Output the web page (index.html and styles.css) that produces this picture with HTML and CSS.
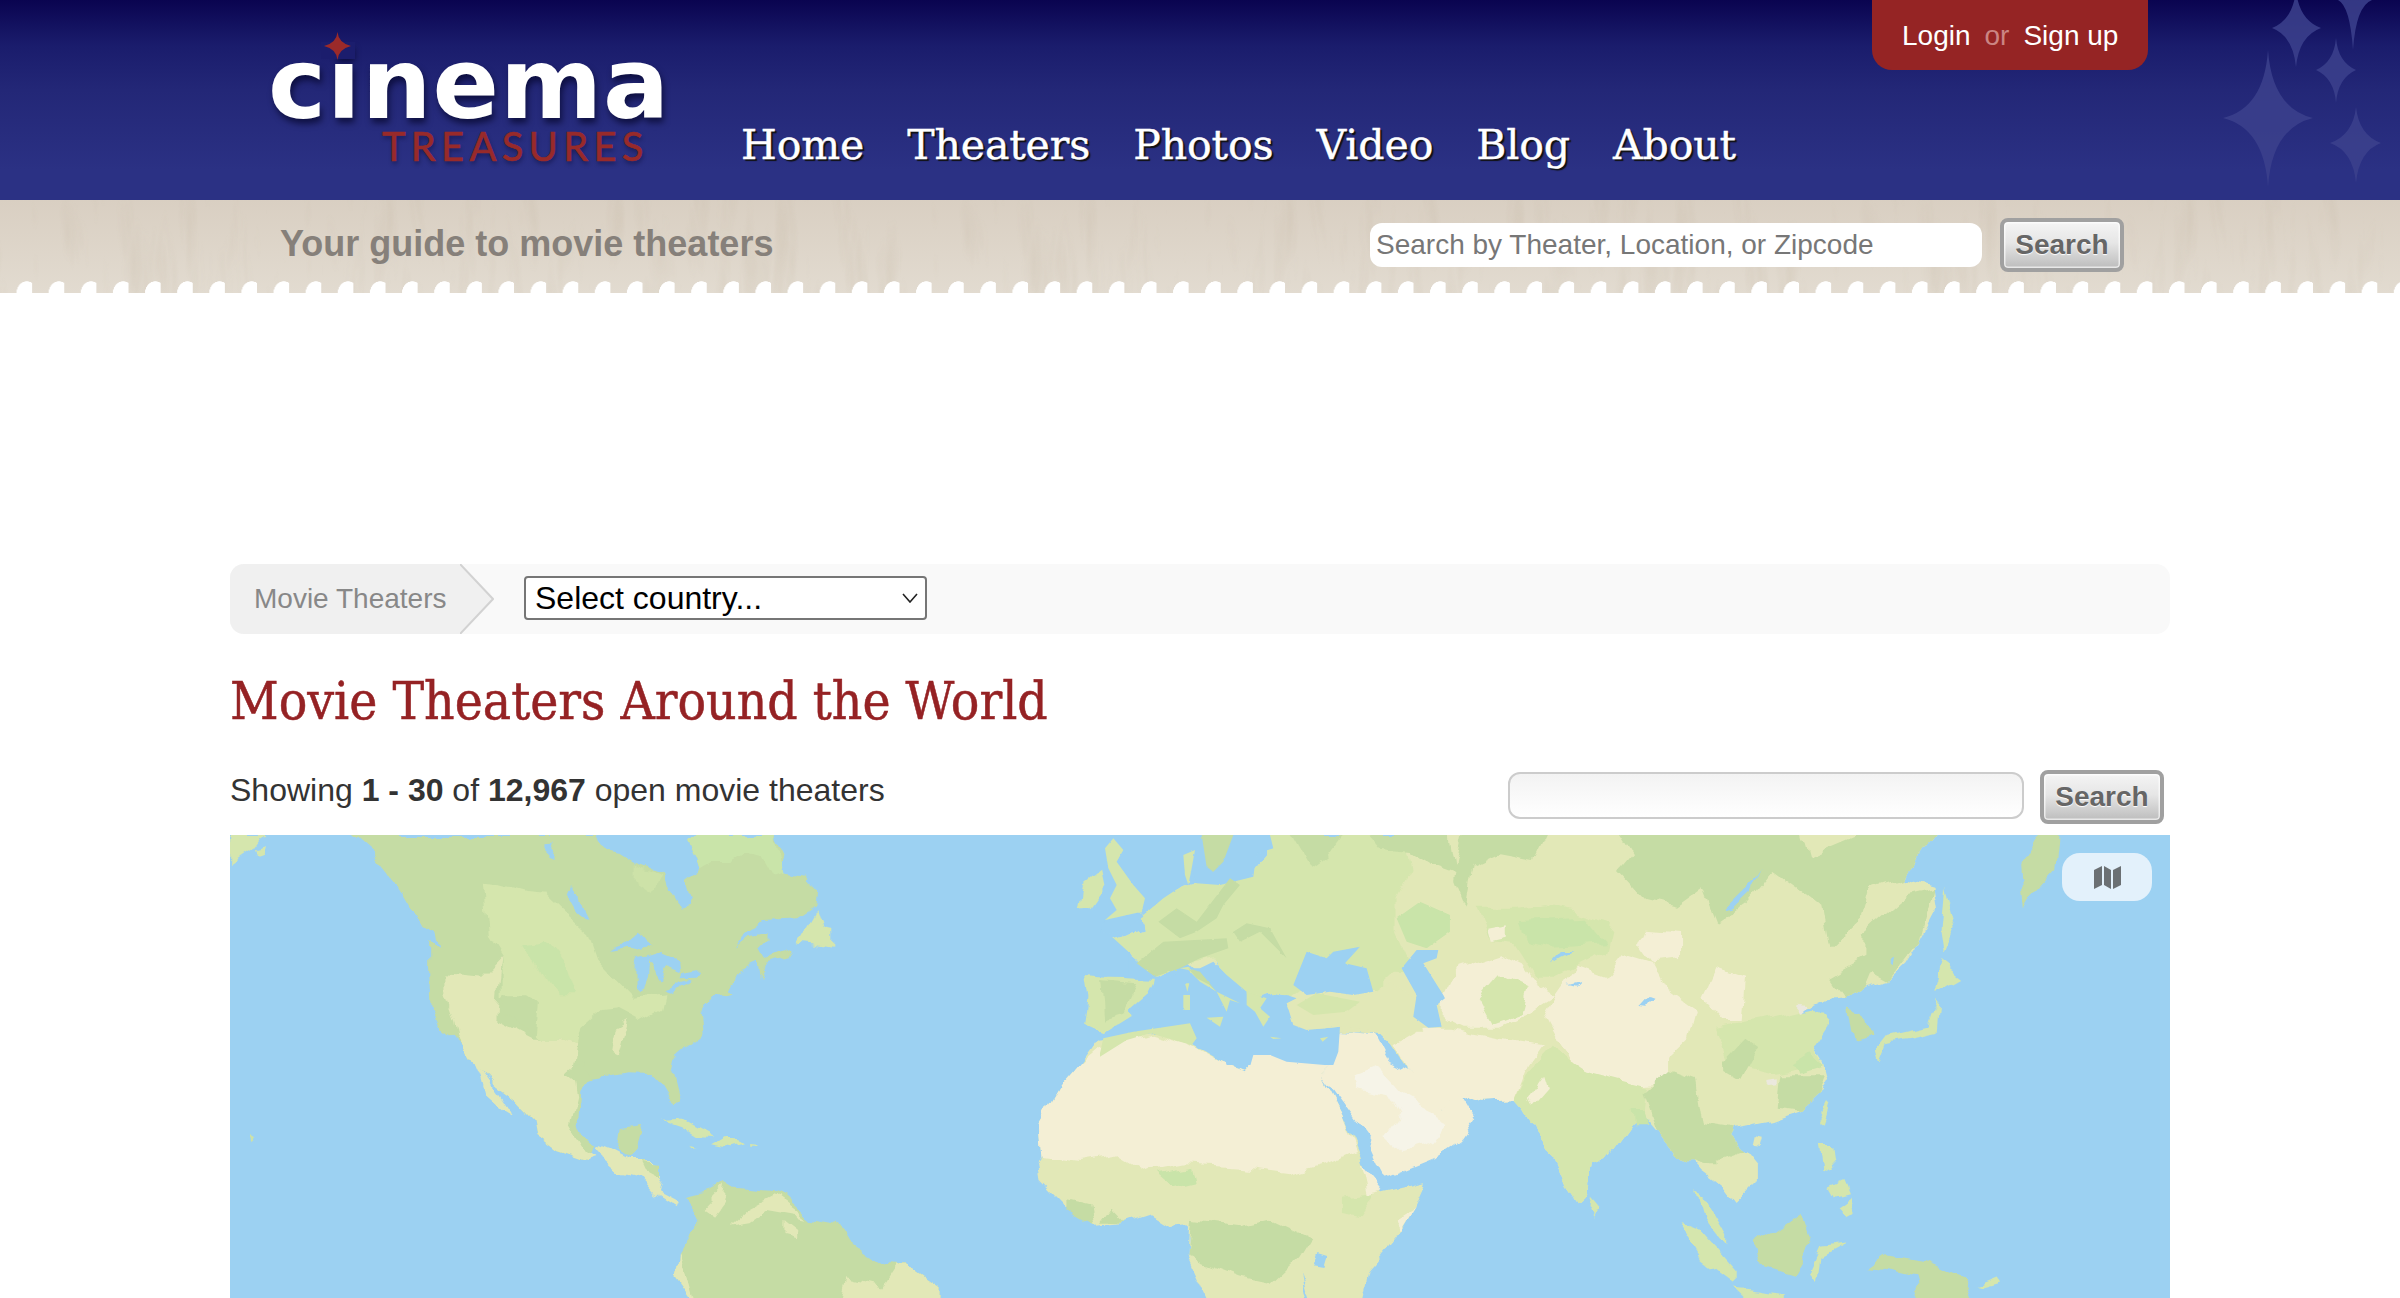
FILE: index.html
```html
<!DOCTYPE html>
<html lang="en">
<head>
<meta charset="utf-8">
<title>Movie Theaters Around the World - Cinema Treasures</title>
<link rel="stylesheet" href="styles.css">
</head>
<body>
<header class="top">
  <svg class="top-stars" viewBox="0 0 200 200" aria-hidden="true">
    <path d="M68 50Q72 108 113 118Q72 128 68 187Q64 128 23 118Q64 108 68 50Z"/>
    <path d="M96 -10Q99 20 121 28Q99 36 96 67Q93 36 72 28Q93 20 96 -10Z"/>
    <path d="M136 38Q138 62 156 70Q138 78 136 103Q134 78 116 70Q134 62 136 38Z"/>
    <path d="M156 107Q159 135 181 143Q159 151 156 183Q153 151 130 143Q153 135 156 107Z"/>
    <path d="M153 -30Q156 -6 172 0Q156 6 153 50Q150 6 138 0Q150 -6 153 -30Z"/>
  </svg>
  <a class="logo" href="#">
    <span class="logo-word">cinema</span>
    <span class="logo-sub">TREASURES</span>
    <svg class="logo-star" viewBox="-3 0 34 28" aria-hidden="true"><rect class="logo-star-back" x="-3" y="10" width="34" height="17"/><path d="M13.5 0Q14.5 11 27 14Q14.5 17 13.5 28Q12.5 17 0 14Q12.5 11 13.5 0Z"/></svg>
  </a>
  <nav class="nav">
    <a href="#">Home</a><a href="#">Theaters</a><a href="#">Photos</a><a href="#">Video</a><a href="#">Blog</a><a href="#">About</a>
  </nav>
  <div class="account"><a href="#">Login</a><span class="account-or">or</span><a href="#">Sign up</a></div>
</header>
<div class="band">
  <div class="tagline">Your guide to movie theaters</div>
  <form class="band-search">
    <input class="band-input" type="text" placeholder="Search by Theater, Location, or Zipcode">
    <button class="btn" type="button">Search</button>
  </form>
</div>
<main class="page">
  <div class="crumbs">
    <span class="crumb">Movie Theaters</span>
    <svg class="crumb-arrow" viewBox="0 0 34 70" aria-hidden="true"><path class="crumb-fill" d="M0 0L33 35L0 70Z"/><path class="crumb-line" d="M0 0L33 35L0 70"/></svg>
    <select class="country"><option>Select country...</option></select>
  </div>
  <h1 class="title">Movie Theaters Around the World</h1>
  <div class="results">
    <p class="count">Showing <b>1 - 30</b> of <b>12,967</b> open movie theaters</p>
    <form class="filter">
      <input class="filter-input" type="text">
      <button class="btn" type="button">Search</button>
    </form>
  </div>
  <section class="map">
    <svg class="map-art" viewBox="230 834 1940 464" preserveAspectRatio="none" aria-hidden="true">
      <defs>
        <filter id="rough" x="-5%" y="-5%" width="110%" height="110%">
          <feTurbulence type="fractalNoise" baseFrequency="0.035" numOctaves="3" seed="4" result="n"/>
          <feDisplacementMap in="SourceGraphic" in2="n" scale="16" xChannelSelector="R" yChannelSelector="G"/>
        </filter>
        <filter id="rough-fine" x="-5%" y="-5%" width="110%" height="110%">
          <feTurbulence type="fractalNoise" baseFrequency="0.06" numOctaves="3" seed="7" result="n"/>
          <feDisplacementMap in="SourceGraphic" in2="n" scale="6" xChannelSelector="R" yChannelSelector="G"/>
        </filter>
      </defs>
      <g class="map-land">
      <g transform="translate(220 830) scale(.6378 .3333)">
        <polygon class="m" points="16,12 68,12 50,60 20,100 16,105"/>
        <polygon class="m" points="55,55 72,45 68,65 58,72"/>
        <polygon class="d" points="205,12 590,12 605,60 625,66 650,95 695,125 700,170 720,240 735,200 728,145 752,110 735,12 870,12 885,70 880,130 920,140 938,180 935,225 905,265 850,270 825,300 805,350 830,310 860,300 860,330 850,350 860,385 895,355 890,385 860,400 850,435 845,400 810,430 800,470 805,480 775,490 760,530 752,555 755,600 745,630 712,685 708,720 720,810 714,820 695,760 675,720 640,718 580,735 565,770 562,870 570,905 590,940 575,990 530,960 495,910 490,860 460,800 430,760 400,700 385,650 350,590 330,520 328,420 328,330 345,350 340,300 300,240 285,190 265,130 240,70"/>
        <polygon class="b" points="735,12 870,12 885,130 870,140 850,70 825,60 800,90 770,90 752,110"/>
        <polygon class="w" points="650,100 690,130 680,180 650,140"/>
        <polygon class="m" points="412,155 440,160 480,180 510,185 540,240 575,300 590,380 620,440 650,500 700,490 695,530 660,570 625,535 600,540 565,600 560,640 530,620 500,620 440,500 440,380 420,320"/>
        <polygon class="b" points="480,340 510,330 540,400 555,490 525,490 505,430"/>
        <polygon class="y" points="355,430 410,440 440,380 435,450 430,560 490,620 530,620 560,640 555,710 560,800 550,880 575,960 590,980 575,990 530,960 495,910 490,860 460,800 430,760 400,700 385,650 375,620 370,560 355,480"/>
        <polygon class="d" points="480,490 500,520 495,610 460,570 435,545 445,490"/>
        <polygon class="d" points="545,730 570,690 585,740 560,750"/>
        <polygon class="y" points="620,590 640,570 625,670 615,660"/>
        <polygon class="sea" points="550,165 565,190 578,265 560,240 545,190"/>
        <polygon class="sea" points="515,40 528,38 522,90 515,85"/>
        <polygon class="sea" points="615,360 650,305 680,345 665,365 640,350"/>
        <polygon class="sea" points="655,390 670,385 668,440 660,480 650,470 650,410"/>
        <polygon class="sea" points="690,372 720,395 722,430 700,410 690,450 668,385"/>
        <polygon class="sea" points="695,475 735,445 740,450 705,482"/>
        <polygon class="sea" points="725,428 755,418 748,440 722,442"/>
        <polygon class="y" points="395,680 410,720 440,800 458,855 445,840 415,790 408,740"/>
        <polygon class="d" points="620,960 625,895 660,885 650,960 640,985"/>
        <polygon class="m" points="690,860 720,858 772,912 745,910 720,880"/>
        <polygon class="m" points="770,940 790,918 825,940 800,952"/>
        <polygon class="m" points="738,942 750,948 742,952"/>
        <polygon class="m" points="836,942 848,944 846,950 836,950"/>
        <polygon class="w" points="44,912 52,922 46,934"/>
        <polygon class="m" points="905,335 935,235 945,295 960,300 960,350 930,340"/>
        <polygon class="y" points="590,945 610,960 640,990 680,990 692,1040 685,1090 715,1120 712,1135 680,1095 655,1040 625,1025 600,985"/>
        <polygon class="d" points="660,990 690,995 690,1050 670,1030"/>
        <polygon class="d" points="745,1420 715,1340 720,1270 745,1200 745,1125 730,1100 770,1085 795,1052 810,1070 870,1080 890,1100 925,1160 970,1175 990,1240 1040,1305 1080,1310 1125,1370 1125,1420"/>
        <polygon class="y" points="975,1420 985,1345 1040,1370 1060,1310 1080,1310 1125,1370 1125,1420"/>
        <polygon class="y" points="795,1190 830,1130 870,1090 920,1160 860,1140 830,1180"/>
        <polygon class="y" points="755,1140 795,1060 790,1110 770,1160"/>
        <polygon class="y" points="715,1340 720,1270 735,1350 745,1420"/>
        <polygon class="y" points="885,1170 905,1200 905,1225 885,1215"/>
        <polygon class="m" points="1350,170 1380,125 1385,170 1365,225 1345,230"/>
        <polygon class="m" points="1355,435 1465,450 1455,490 1430,530 1430,570 1385,600 1355,575 1360,500"/>
        <polygon class="d" points="1380,450 1440,460 1420,540 1385,560"/>
      </g>
      <g transform="translate(1100 830) scale(.7013 .3333)">
        <polygon class="y" points="240,0 1195,0 1170,70 1145,140 1190,165 1195,230 1170,330 1150,400 1125,450 1090,470 1060,500 1030,510 1005,535 1015,570 1040,575 1020,610 1020,640 1035,690 1040,730 1025,790 1000,840 960,870 905,895 900,925 935,1000 935,1050 905,1115 885,1060 860,1020 845,985 830,985 815,960 795,900 775,850 755,880 720,980 700,1000 695,1090 680,1120 660,1060 640,960 620,900 605,845 590,810 545,815 510,790 490,830 465,790 440,720 415,640 400,610 345,600 295,590 265,520 275,500 250,490 215,510 240,585 205,500 165,400 160,385 195,520 180,540 140,430 125,400 75,440 60,400 15,320 60,290 55,250 95,190 130,160 150,150 210,145 240,70"/>
        <polygon class="m" points="240,0 300,0 430,0 440,120 420,200 420,300 440,400 400,480 290,480 265,520 275,500 250,490 215,510 205,500 165,400 160,385 125,400 75,440 60,400 15,320 60,290 55,250 95,190 130,160 150,150 210,145 240,70"/>
        <polygon class="d" points="380,0 500,0 510,130 470,100 440,60 400,50"/>
        <polygon class="d" points="270,0 350,0 320,80 300,110"/>
        <polygon class="d" points="520,0 640,0 620,90 570,70 530,110 520,230 505,150"/>
        <polygon class="d" points="740,0 1000,0 1010,80 1100,0 1195,0 1170,70 1145,140 1100,170 1090,250 1040,350 1030,230 1000,180 960,120 920,220 880,280 860,170 820,230 780,210 740,120 760,70"/>
        <polygon class="d" points="1090,300 1150,190 1190,170 1170,330 1125,450 1100,420 1090,470 1060,500 1040,440 1090,380"/>
        <polygon class="m" points="540,230 590,230 640,220 730,280 720,370 650,440 620,440 590,340 560,330"/>
        <polygon class="b" points="600,270 690,260 720,340 650,350 610,330"/>
        <polygon class="s" points="555,290 580,280 580,320 560,330"/>
        <polygon class="s" points="490,500 510,410 570,370 600,400 620,460 650,500 620,540 570,590 520,590 490,560"/>
        <polygon class="m" points="540,500 570,430 610,470 600,550 560,580"/>
        <polygon class="s" points="635,560 650,500 680,410 720,440 745,370 790,400 810,480 850,540 840,620 810,680 810,760 740,770 680,720 650,620"/>
        <polygon class="s" points="780,290 830,300 830,390 790,400 770,340"/>
        <polygon class="s" points="860,500 880,410 920,440 915,570 890,570"/>
        <polygon class="s" points="420,640 460,590 500,590 570,620 630,640 610,700 590,810 545,815 510,790 490,830 465,790 440,720"/>
        <polygon class="m" points="880,590 960,560 1020,530 1040,575 1020,640 1035,700 960,730 900,700"/>
        <polygon class="d" points="965,830 970,730 1035,730 1025,790 1000,840"/>
        <polygon class="d" points="890,690 920,620 940,650 915,750 890,720"/>
        <polygon class="b" points="985,700 1015,660 1035,700 1000,722"/>
        <polygon class="g" points="995,515 1015,520 1005,540"/>
        <polygon class="g" points="950,750 965,745 965,760 952,762"/>
        <polygon class="m" points="640,650 690,720 780,770 775,850 755,880 720,980 700,1000 695,1090 680,1120 660,1060 640,960 620,900 605,845 590,810 610,720"/>
        <polygon class="s" points="610,810 635,735 640,770 615,830"/>
        <polygon class="b" points="758,840 775,840 782,880 760,880"/>
        <polygon class="d" points="810,720 850,750 860,880 905,895 900,925 935,1000 900,1000 870,1000 845,985 830,985 815,960 795,900 775,790"/>
        <polygon class="y" points="880,990 920,960 935,1000 935,1050 905,1115 885,1060"/>
        <polygon class="m" points="850,1090 865,1110 890,1200 890,1240 860,1160"/>
        <polygon class="m" points="825,1170 850,1190 905,1320 905,1360 860,1290"/>
        <polygon class="d" points="935,1240 1000,1145 1015,1240 990,1330 945,1300"/>
        <polygon class="m" points="1015,1320 1030,1250 1065,1240 1030,1280 1025,1350"/>
        <polygon class="m" points="905,1370 975,1390 975,1420 930,1420"/>
        <polygon class="d" points="1090,1315 1120,1270 1175,1290 1230,1340 1250,1420 1170,1420 1160,1340 1120,1320"/>
        <polygon class="m" points="1250,1365 1280,1340 1285,1355 1260,1370"/>
        <polygon class="m" points="1025,945 1040,945 1045,1020 1030,1010"/>
        <polygon class="m" points="1050,1130 1070,1100 1078,1150 1065,1165"/>
        <polygon class="m" points="1040,1070 1060,1050 1068,1090 1048,1100"/>
        <polygon class="m" points="1035,820 1040,825 1032,875 1025,865"/>
        <polygon class="y" points="935,915 945,920 942,945 932,942"/>
        <polygon class="d" points="1065,530 1090,540 1100,620 1075,635"/>
        <polygon class="m" points="1105,660 1120,620 1180,590 1195,500 1190,610 1120,640 1110,695"/>
        <polygon class="m" points="1190,460 1200,390 1228,435 1190,480"/>
        <polygon class="m" points="1205,170 1220,290 1205,370 1200,300"/>
        <polygon class="d" points="1320,240 1315,100 1340,0 1370,0 1365,120 1330,200"/>
        <polygon class="m" points="700,1100 712,1130 705,1160 698,1130"/>
        <polygon class="y" points="-86,880 -54,765 -27,700 0,620 70,600 130,590 135,640 175,690 205,715 225,670 280,700 330,700 315,730 345,850 370,970 380,1040 405,1090 465,1060 450,1130 425,1220 380,1330 370,1420 155,1420 125,1280 127,1180 100,1185 73,1150 36,1175 -9,1185 -45,1130 -82,1050 -86,1000 -82,975"/>
        <polygon class="s" points="-27,700 0,650 70,605 130,640 175,690 205,715 225,670 280,700 330,700 315,730 345,850 365,960 320,1000 270,1030 200,1010 120,1000 70,1020 30,970 -30,990 -82,975 -86,880 -54,765"/>
        <polygon class="b" points="80,1030 130,1010 135,1060 105,1075"/>
        <polygon class="d" points="125,1280 130,1160 200,1180 240,1160 300,1220 280,1290 245,1360 200,1340 150,1300"/>
        <polygon class="d" points="-45,1105 -15,1120 -9,1185 -45,1140"/>
        <polygon class="d" points="15,1130 36,1175 0,1175"/>
        <polygon class="m" points="345,1100 390,1090 370,1150 345,1140"/>
        <polygon class="s" points="420,1170 450,1130 430,1200"/>
        <polygon class="s" points="340,600 390,610 410,690 440,720 470,790 490,830 510,780 535,870 515,930 480,980 410,1040 400,1000 385,930 350,830 315,730 330,700"/>
        <polygon class="l" points="360,740 395,710 430,790 460,830 500,870 480,930 430,960 410,920 430,860 410,790 365,770"/>
        <polygon class="s" points="372,1000 405,1085 382,1095"/>
        <polygon class="sea" points="890,235 930,150 942,110 925,190 905,230"/>
        <polygon class="sea" points="645,395 660,360 675,360 660,375"/>
        <polygon class="sea" points="668,465 685,455 678,470"/>
        <polygon class="sea" points="772,525 785,495 792,500 782,527"/>
        <polygon class="sea" points="1120,400 1128,392 1126,412"/>
        <polygon class="sea" points="310,1260 325,1270 320,1305 305,1300"/>
        <polygon class="sea" points="285,1320 300,1420 294,1420"/>
      </g>
      </g>
      <g class="map-land-fine" transform="translate(1100 834) scale(.3333)">
        <polygon class="sea" points="0,610 20,590 100,540 160,470 165,425 215,425 250,400 300,400 340,380 380,420 440,470 445,510 480,490 560,480 590,490 560,510 580,570 620,585 720,575 715,650 700,690 380,690 370,660 290,640 280,590 270,565 150,590 30,610"/>
        <polygon class="m" points="0,655 10,610 100,590 270,565 290,610 275,630 150,595 80,615 0,665"/>
        <polygon class="s" points="450,695 460,660 510,660 560,680 700,692"/>
        <polygon class="m" points="240,400 265,395 300,420 350,470 420,505 390,495 380,530 350,470 300,440 265,405"/>
        <polygon class="d" points="265,400 300,410 350,470 330,450 290,430"/>
        <polygon class="m" points="250,480 270,480 270,525 250,525"/>
        <polygon class="m" points="255,445 268,445 262,470"/>
        <polygon class="m" points="320,548 370,545 360,575"/>
        <polygon class="m" points="510,605 545,610 520,612"/>
        <polygon class="m" points="660,610 685,605 668,620"/>
        <polygon class="m" points="440,470 500,490 480,520 510,545 490,575 465,530 440,510"/>
        <polygon class="sea" points="75,0 300,0 290,60 255,60 250,150 190,190 130,240 125,235 135,190 100,150 50,80 70,45"/>
        <polygon class="sea" points="15,255 125,232 130,245 80,280 30,295 0,290"/>
        <polygon class="sea" points="0,290 30,300 85,350 85,425 0,425"/>
        <polygon class="sea" points="400,0 510,0 520,40 470,55 460,125 360,150 290,145 275,100 370,80"/>
        <polygon class="m" points="15,40 40,10 70,45 50,80 100,150 135,190 125,230 15,255 50,225 30,190 50,150 25,100"/>
        <polygon class="d" points="305,0 400,0 370,80 340,110 320,95"/>
        <polygon class="m" points="250,60 285,45 275,100 265,150 255,120"/>
        <polygon class="d" points="110,385 190,320 380,310 385,340 300,370 240,400 165,425"/>
        <polygon class="d" points="175,260 230,220 290,260 390,130 420,150 370,210 350,250 290,290 240,310"/>
        <polygon class="d" points="400,290 440,265 510,280 560,370 480,290 420,320"/>
        <polygon class="y" points="560,505 590,490 650,460 700,470 780,485 830,470 870,440 945,490 970,590 860,590 720,575 620,585 580,570"/>
        <polygon class="m" points="590,510 650,475 780,500 740,530 640,540"/>
        <polygon class="sea" points="580,450 620,350 680,370 700,350 780,335 735,385 800,400 820,470 760,480 690,470 620,480"/>
        <polygon class="sea" points="905,400 950,345 1015,345 1010,370 970,385 1030,480 1035,490 1010,510 1025,575 985,578 940,545 950,480"/>
        <polygon class="b" points="890,250 960,200 1050,240 1050,290 980,340 920,320"/>
      </g>
    </svg>
    <button class="map-toggle" type="button" aria-label="Map view">
      <svg class="map-icon" viewBox="0 0 27 25"><path d="M0 5L8 1V20L0 24Z"/><path d="M10 1L17 5V24L10 20Z"/><path d="M19 5L27 1V20L19 24Z"/></svg>
    </button>
  </section>
</main>
</body>
</html>
```
FILE: styles.css
```css
html, body { margin: 0; padding: 0; }
body { background: #fff; font-family: "Liberation Sans", Arial, sans-serif; color: #333; overflow: hidden; }
a { color: inherit; text-decoration: none; }

.top {
  position: relative;
  display: flex;
  height: 200px;
  padding-left: 270px;
  background: linear-gradient(#0a0450 0, #1a1c6c 45px, #232777 90px, #2b3184 170px, #2b3184 100%);
  overflow: hidden;
}
.top-stars { position: absolute; top: 0; right: 0; width: 200px; height: 200px; fill: #3c418d; opacity: .85; overflow: visible; }

.logo { position: relative; display: block; width: 471px; flex: none; }
.logo-star { position: absolute; left: 51px; top: 32px; width: 34px; height: 28px; fill: #9b2a2a; }
.logo-star-back { fill: #1b1d6d; }
.logo-word { display: block; margin: 54px 0 0 -2px; font: bold 98px/60px "DejaVu Sans", sans-serif; color: #fff; letter-spacing: 1px; text-shadow: 2px 5px 6px rgba(0, 0, 30, .6); }
.logo-sub { position: absolute; left: 112px; top: 126px; font: 40px/40px Lato, sans-serif; letter-spacing: 5.2px; color: #982a2a; -webkit-text-stroke: .6px #982a2a; text-shadow: 1px 3px 4px rgba(0, 0, 30, .4); }

.nav { display: flex; gap: 43px; margin-top: 120px; height: 60px; position: relative; }
.nav a { font: 41px/50px "DejaVu Serif", serif; letter-spacing: -.1px; color: #fff; -webkit-text-stroke: .4px #fff; text-shadow: 2px 2px 1px #111; }

.account {
  position: relative;
  display: flex;
  align-items: center;
  gap: 14px;
  box-sizing: border-box;
  width: 276px;
  height: 70px;
  margin: 0 252px 0 auto;
  padding: 2px 0 0 30px;
  background: #952424;
  border-radius: 0 0 20px 20px;
  color: #fff;
  font-size: 28px;
}
.account-or { color: #cb8583; }

.band {
  display: flex;
  align-items: center;
  box-sizing: border-box;
  height: 93px;
  padding: 18px 276px 21px 280px;
  background:
    radial-gradient(ellipse 10.5px 12px at 26.8px 12px, #fff 95%, rgba(255, 255, 255, 0) 100%) 0 100% / 32.13px 12px repeat-x,
    url("data:image/svg+xml,%3Csvg xmlns='http://www.w3.org/2000/svg' width='900' height='93'%3E%3Cfilter id='n'%3E%3CfeTurbulence baseFrequency='.035 .006' numOctaves='3' seed='3'/%3E%3CfeColorMatrix values='0 0 0 0 .45 0 0 0 0 .37 0 0 0 0 .26 0 0 0 .3 -.08'/%3E%3C/filter%3E%3Crect width='900' height='93' filter='url(%23n)'/%3E%3C/svg%3E"),
    linear-gradient(#d9cfc2, #e2dbd0);
}
.tagline { font-size: 36px; font-weight: bold; color: #86807a; margin-top: -2px; }
.band-search { display: flex; align-items: center; gap: 18px; margin-left: auto; }
.band-input {
  box-sizing: border-box;
  width: 612px;
  height: 44px;
  padding: 0 6px;
  border: 0;
  border-radius: 12px;
  background: #fff;
  font: 28px "Liberation Sans", sans-serif;
}
.band-input::placeholder { color: #777; opacity: 1; }

.btn {
  box-sizing: border-box;
  width: 124px;
  height: 54px;
  padding: 0;
  border: 4px solid #a0a0a0;
  border-radius: 8px;
  background: linear-gradient(#f4f4f4, #e6e6e6 45%, #bdbdbd);
  box-shadow: inset 0 0 0 1.5px rgba(255, 255, 255, .65);
  color: #666;
  font: bold 28px "Liberation Sans", sans-serif;
  text-shadow: 0 1px 1px #fff;
}

.page { width: 1940px; margin: 271px auto 0; }

.crumbs { display: flex; align-items: center; height: 70px; background: #f9f9f9; border-radius: 14px; }
.crumb {
  box-sizing: border-box;
  width: 230px;
  height: 70px;
  padding-left: 24px;
  background: #f0f0f0;
  border-radius: 14px 0 0 14px;
  color: #888;
  font-size: 28px;
  line-height: 70px;
}
.crumb-arrow { width: 34px; height: 70px; flex: none; }
.crumb-fill { fill: #f0f0f0; }
.crumb-line { fill: none; stroke: #d2d2d2; stroke-width: 2; }
.country {
  box-sizing: border-box;
  width: 403px;
  height: 44px;
  margin: -2px 0 0 30px;
  padding: 0 0 0 9px;
  border: 2px solid #767676;
  border-radius: 4px;
  appearance: none;
  background: #fff url("data:image/svg+xml,%3Csvg xmlns='http://www.w3.org/2000/svg' width='16' height='10'%3E%3Cpath d='M1 1l7 8 7-8' fill='none' stroke='%23222' stroke-width='1.6'/%3E%3C/svg%3E") no-repeat right 7px center;
  color: #000;
  font: 32px "Liberation Sans", sans-serif;
}

.title { margin: 37px 0 0; font: normal 52.8px/60px "DejaVu Serif", serif; font-stretch: condensed; color: #952224; -webkit-text-stroke: .5px #952224; }

.results { display: flex; justify-content: space-between; align-items: flex-start; margin-top: 39px; height: 65px; }
.count { margin: -2px 0 0; font-size: 32px; line-height: 44px; color: #333; }
.filter { display: flex; align-items: center; gap: 16px; margin-right: 6px; }
.filter-input {
  box-sizing: border-box;
  width: 516px;
  height: 47px;
  margin-bottom: 3px;
  border: 2px solid #ccc;
  border-radius: 12px;
  background: linear-gradient(#f3f3f3, #fff);
}

.map { position: relative; height: 464px; background: #9cd1f2; overflow: hidden; }
.map-art { display: block; width: 1940px; height: 464px; }
.map-land { filter: url(#rough); }
.map-land-fine { filter: url(#rough-fine); }
.map-toggle {
  position: absolute;
  top: 18px;
  right: 18px;
  display: flex;
  align-items: center;
  justify-content: center;
  width: 90px;
  height: 48px;
  padding: 0;
  border: 0;
  border-radius: 18px;
  background: #e3f1fb;
}
.map-icon { width: 27px; height: 25px; fill: #6b7073; }

.sea { fill: #9cd1f2; }
.d { fill: #c5dca4; }
.m { fill: #d5e6ad; }
.y { fill: #e2e8b7; }
.s { fill: #f4efd5; }
.l { fill: #f6f4e8; }
.b { fill: #c9e4a9; }
.w { fill: #cde2a8; }
.g { fill: #ebe8dd; }
```
